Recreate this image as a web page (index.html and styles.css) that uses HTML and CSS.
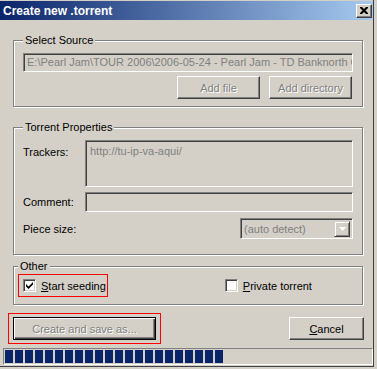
FILE: index.html
```html
<!DOCTYPE html>
<html lang="en">
  <head>
    <meta charset="UTF-8" />
    <title>Create new .torrent</title>
    <link rel="stylesheet" href="styles.css">
  </head>
  <body>
    <div class="window">
      <div class="titlebar">
        <span class="title">Create new .torrent</span>
        <span class="close-btn">
          <svg width="8" height="7" viewBox="0 0 8 7"><path d="M0 0h2l2 2 2-2h2v1l-2.5 2.5L8 6v1H6L4 5 2 7H0V6l2.5-2.5L0 1z" fill="#000"/></svg>
        </span>
      </div>
      <div class="content">
        <fieldset class="group source">
          <legend>Select Source</legend>
          <div class="field path">E:\Pearl Jam\TOUR 2006\2006-05-24 - Pearl Jam - TD Banknorth G</div>
          <div class="btn-row">
            <span class="btn disabled add-file">Add file</span>
            <span class="btn disabled add-dir">Add directory</span>
          </div>
        </fieldset>

        <fieldset class="group props">
          <legend>Torrent Properties</legend>
          <div class="row tracker-row">
            <span class="label">Trackers:</span>
            <div class="field trackers">http://tu-ip-va-aqui/</div>
          </div>
          <div class="row comment-row">
            <span class="label">Comment:</span>
            <div class="field comment"></div>
          </div>
          <div class="row piece">
            <span class="label">Piece size:</span>
            <div class="field select">
              <span class="select-text">(auto detect)</span>
              <span class="select-arrow">
                <svg width="7" height="4" viewBox="0 0 7 4"><path d="M0 0h7L3.5 4z" fill="#fff"/></svg>
              </span>
            </div>
          </div>
        </fieldset>

        <fieldset class="group other">
          <legend>Other</legend>
          <div class="check-row">
            <label class="check-item seeding">
              <span class="checkbox">
                <svg width="9" height="9" viewBox="0 0 9 9"><path d="M1 3l2.5 2.5L8 1v2.5L3.5 8 1 5.5z" fill="#000"/></svg>
              </span>
              <span><u>S</u>tart seeding</span>
            </label>
            <label class="check-item private">
              <span class="checkbox"></span>
              <span><u>P</u>rivate torrent</span>
            </label>
          </div>
        </fieldset>

        <div class="action-row">
          <div class="highlight">
            <span class="btn disabled default create">Create and save as...</span>
          </div>
          <span class="btn cancel"><u>C</u>ancel</span>
        </div>

        <div class="progress">
          <div class="progress-fill" id="fill"></div>
        </div>
      </div>
    </div>
    <script>
      var fill = document.getElementById("fill");
      for (let i = 0; i < 22; i++) {
        const block = document.createElement("span");
        block.classList.add("block");
        fill.appendChild(block);
      }
    </script>
  </body>
</html>
```

FILE: styles.css
```css
body {
  margin: 0;
  background: #d4d0c8;
  font-family: "Liberation Sans", Arial, sans-serif;
  font-size: 11px;
  color: #000;
}

.window {
  width: 374px;
  height: 367px;
  border-right: 1px solid #404040;
  border-bottom: 1px solid #404040;
  box-sizing: border-box;
  background: #d4d0c8;
  display: flex;
  flex-direction: column;
}

.titlebar {
  height: 19px;
  margin-top: 1px;
  background: linear-gradient(to right, #0a246a, #a6caf0);
  display: flex;
  align-items: center;
  justify-content: space-between;
  padding: 0 1px 0 3px;
  box-sizing: border-box;
}

.title {
  color: #fff;
  font-weight: bold;
  font-size: 12px;
}

.close-btn {
  width: 16px;
  height: 14px;
  box-sizing: border-box;
  background: #d4d0c8;
  border: 1px solid;
  border-color: #fff #404040 #404040 #fff;
  box-shadow: inset -1px -1px #808080;
  display: flex;
  align-items: center;
  justify-content: center;
}

.content {
  display: flex;
  flex-direction: column;
  padding: 0 10px 0 13px;
}

.group {
  margin: 0;
  min-width: 0;
  box-sizing: border-box;
  padding: 0 9px;
  border: 1px solid #808080;
  box-shadow: 1px 1px 0 #fff, inset 1px 1px 0 #fff;
}

.group legend {
  padding: 0 2px;
  margin-left: 0;
  background: #d4d0c8;
  line-height: 13px;
}

.source {
  margin-top: 14px;
  height: 73px;
}

.field {
  background: #d4d0c8;
  border: 1px solid;
  border-color: #808080 #fff #fff #808080;
  box-shadow: inset 1px 1px #404040, inset -1px -1px #d4d0c8;
  box-sizing: border-box;
  color: #808080;
  white-space: nowrap;
  overflow: hidden;
}

.path {
  margin-top: 6px;
  height: 19px;
  line-height: 17px;
  padding-left: 3px;
}

.btn-row {
  display: flex;
  justify-content: flex-end;
  gap: 9px;
  margin-top: 4px;
}

.btn {
  height: 23px;
  box-sizing: border-box;
  border: 1px solid;
  border-color: #fff #404040 #404040 #fff;
  box-shadow: inset -1px -1px #808080;
  display: flex;
  align-items: center;
  justify-content: center;
}

.btn.disabled {
  color: #808080;
  text-shadow: 1px 1px 0 #fff;
}

.add-file {
  width: 83px;
}

.add-dir {
  width: 83px;
  margin-right: 1px;
}

.props {
  margin-top: 14px;
  height: 134px;
}

.row {
  display: flex;
  align-items: flex-start;
}

.label {
  width: 62px;
  flex: none;
}

.tracker-row .label {
  margin-top: 12px;
}

.trackers {
  margin-top: 6px;
  height: 47px;
  flex: 1;
  padding: 4px 4px;
}

.comment-row {
  align-items: center;
  margin-top: 5px;
}

.comment {
  height: 20px;
  flex: 1;
}

.piece {
  align-items: center;
  justify-content: space-between;
  margin-top: 6px;
}

.select {
  width: 113px;
  height: 21px;
  display: flex;
  align-items: center;
  justify-content: space-between;
  padding: 2px;
  color: #808080;
}

.select-text {
  padding-left: 1px;
}

.select-arrow {
  width: 16px;
  height: 16px;
  box-sizing: border-box;
  border: 1px solid;
  border-color: #d4d0c8 #404040 #404040 #d4d0c8;
  box-shadow: inset 1px 1px #fff, inset -1px -1px #808080;
  display: flex;
  align-items: center;
  justify-content: center;
}

.other {
  margin-top: 5px;
  height: 45px;
  padding-left: 4px;
}

.check-row {
  display: flex;
  align-items: center;
  margin-top: 1px;
}

.check-item {
  display: flex;
  align-items: center;
  gap: 5px;
  white-space: nowrap;
}

.seeding {
  border: 1px solid #f00;
  padding: 4px 1px 4px 4px;
  margin-top: 0;
}

.private {
  margin-left: 117px;
}

.checkbox {
  width: 13px;
  height: 13px;
  box-sizing: border-box;
  background: #fff;
  border: 1px solid;
  border-color: #808080 #fff #fff #808080;
  box-shadow: inset 1px 1px #404040, inset -1px -1px #d4d0c8;
  display: flex;
  align-items: center;
  justify-content: center;
}

.action-row {
  display: flex;
  justify-content: space-between;
  align-items: center;
  margin-top: 8px;
  margin-left: -5px;
  margin-right: -1px;
}

.highlight {
  border: 1px solid #f00;
  padding: 3px 4px 3px 4px;
}

.create {
  width: 143px;
  height: 23px;
  border-color: #000;
  box-shadow: inset 1px 1px #fff, inset -1px -1px #404040, inset -2px -2px #808080;
}

.cancel {
  width: 75px;
  height: 23px;
}

.progress {
  margin: 4px 0 0 -10px;
  width: 370px;
  height: 17px;
  box-sizing: border-box;
  border: 1px solid;
  border-color: #808080 #fff #fff #808080;
  padding: 1px 1px;
}

.progress-fill {
  display: flex;
  gap: 2px;
  height: 100%;
}

.block {
  width: 8px;
  height: 100%;
  background: #0a246a;
}
```
